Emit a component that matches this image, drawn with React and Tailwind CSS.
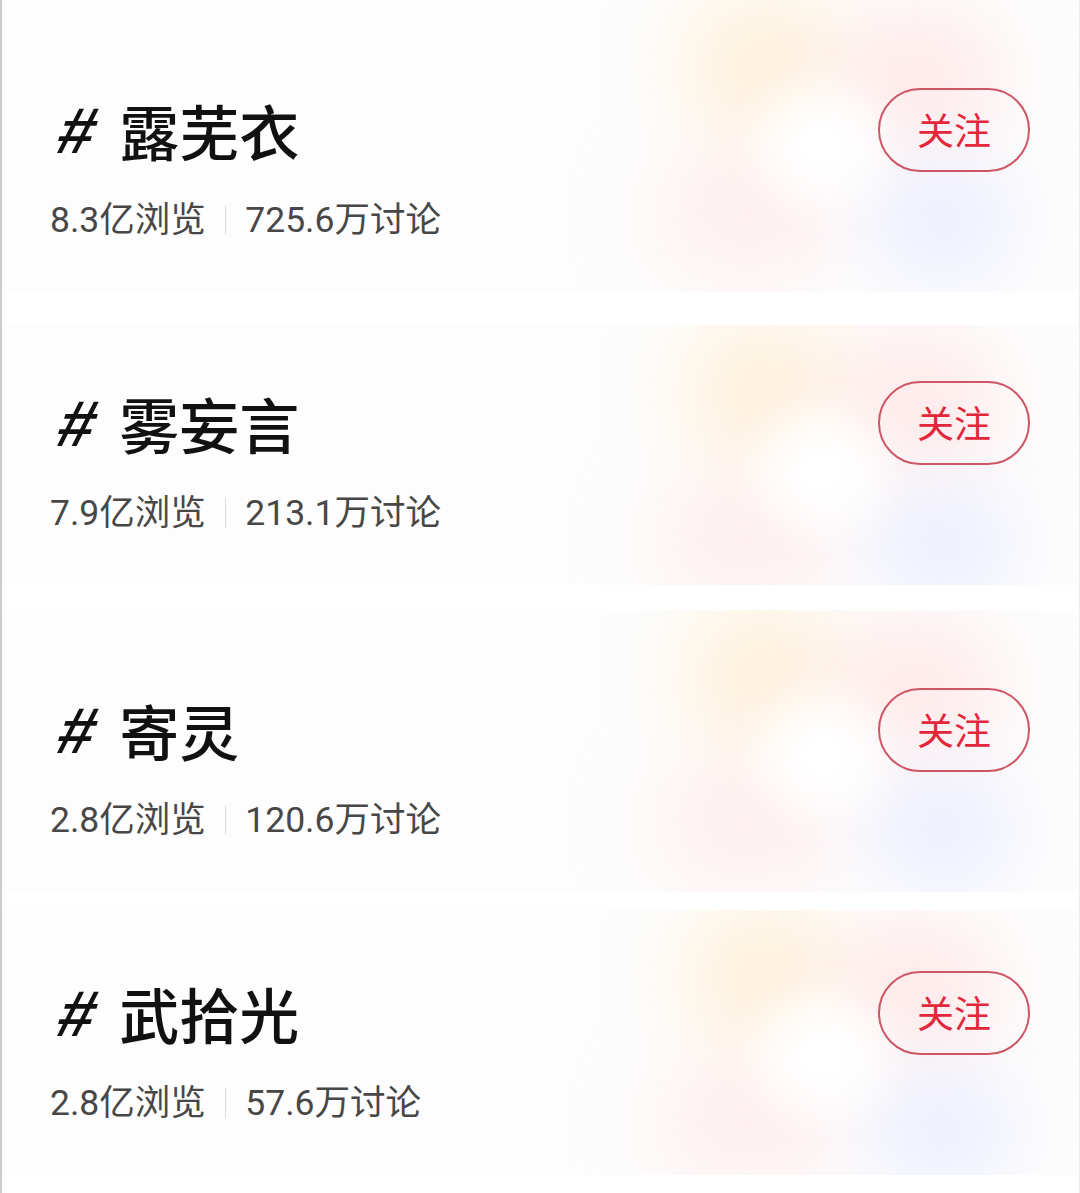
import React from "react";

const topics = [
    { name: "露芜衣", views: "8.3亿浏览", talks: "725.6万讨论", box: "mt-0 h-[292px] pt-[88px]" },
    { name: "雾妄言", views: "7.9亿浏览", talks: "213.1万讨论", box: "mt-[33px] h-[260px] pt-[56px]" },
    { name: "寄灵", views: "2.8亿浏览", talks: "120.6万讨论", box: "mt-[25px] h-[282px] pt-[78px]" },
    { name: "武拾光", views: "2.8亿浏览", talks: "57.6万讨论", box: "mt-[18px] h-[265px] pt-[61px]" },
];

// blurred colour cloud behind the follow button
function Glow() {
    return (
        <div className="pointer-events-none absolute inset-y-0 left-[630px] w-[420px]">
            <div className="absolute left-[50px] top-[-10px] h-[150px] w-[160px] rounded-full bg-[#ffeccc] opacity-70 blur-2xl" />
            <div className="absolute left-[200px] top-[10px] h-[140px] w-[170px] rounded-full bg-[#ffe2e2] opacity-70 blur-2xl" />
            <div className="absolute left-[20px] top-[150px] h-[130px] w-[190px] rounded-full bg-[#ffe6e6] opacity-60 blur-2xl" />
            <div className="absolute left-[240px] top-[160px] h-[120px] w-[140px] rounded-full bg-[#e6eaff] opacity-80 blur-2xl" />
            <div className="absolute left-[130px] top-[90px] h-[110px] w-[120px] rounded-full bg-white blur-xl" />
        </div>
    );
}

function TopicCard({ topic }) {
    return (
        <div className={`relative overflow-hidden bg-[#fdfdfd] ${topic.box}`}>
            <Glow />
            <div className="relative pl-[48px] pr-[49px]">
                <div className="flex h-[84px] items-center justify-between">
                    <div className="flex items-center leading-none text-[#111]">
                        <span className="mr-[23px] ml-[10px] inline-block -skew-x-[16deg] font-['Liberation_Sans',sans-serif] text-[65px] font-bold">#</span>
                        <span className="font-['Noto_Sans_CJK_SC',sans-serif] text-[60px] font-medium">{topic.name}</span>
                    </div>
                    <button className="flex h-[84px] w-[152px] items-center justify-center rounded-full border-2 border-[#cd5665] bg-transparent font-['Noto_Sans_CJK_SC',sans-serif] text-[37px] text-[#e4263c]">
                        关注
                    </button>
                </div>
                <div className="mt-[28px] flex items-center font-['Roboto','Noto_Sans_CJK_SC',sans-serif] text-[35.5px] leading-[40px] text-[#474747]">
                    <span>{topic.views}</span>
                    <span className="mx-[19px] h-[30px] w-[1.5px] bg-[#dcdcdc]" />
                    <span>{topic.talks}</span>
                </div>
            </div>
        </div>
    );
}

export default function App() {
    return (
        <div className="min-h-[1193px] w-[1080px] border-l-2 border-r border-l-[#cbcbcb] border-r-[#ececec] bg-white">
            {topics.map((t) => (
                <TopicCard key={t.name} topic={t} />
            ))}
        </div>
    );
}
